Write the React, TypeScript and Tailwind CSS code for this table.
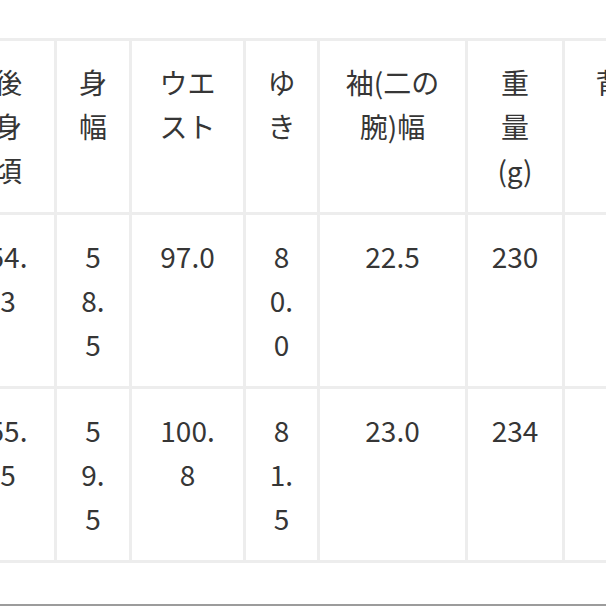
import React from "react";

const header: string[][] = [
  ["後", "身", "頃"],
  ["身", "幅"],
  ["ウエ", "スト"],
  ["ゆ", "き"],
  ["袖(二の", "腕)幅"],
  ["重", "量", "(g)"],
  ["背肩幅"],
];

const rows: string[][][] = [
  [["54.", "3"], ["5", "8.", "5"], ["97.0"], ["8", "0.", "0"], ["22.5"], ["230"], ["44.0"]],
  [["55.", "5"], ["5", "9.", "5"], ["100.", "8"], ["8", "1.", "5"], ["23.0"], ["234"], ["45.0"]],
];

function Cell({ lines }: { lines: string[] }) {
  return (
    <div className="border-r-[3px] border-b-[3px] border-[#ededed] pt-[19px] pb-[20px] text-center whitespace-nowrap">
      {lines.map((l, i) => (
        <div key={i}>{l}</div>
      ))}
    </div>
  );
}

export default function App() {
  return (
    <div
      className="w-[606px] h-[606px] bg-white overflow-hidden flex flex-col border-b-2 border-[#9c9c9c] pt-[38px] text-[28px] leading-[44px] text-[#363636]"
      style={{ fontFamily: '"Noto Sans CJK JP", "Noto Sans", sans-serif' }}
    >
      <div className="-ml-[38px] w-[751px] grid grid-cols-[95px_75px_114px_74px_148px_97px_148px] border-t-[3px] border-[#ededed]">
        {header.map((h, i) => (
          <Cell key={"h" + i} lines={h} />
        ))}
        {rows.map((r, ri) =>
          r.map((c, ci) => <Cell key={ri + "-" + ci} lines={c} />)
        )}
      </div>
    </div>
  );
}
